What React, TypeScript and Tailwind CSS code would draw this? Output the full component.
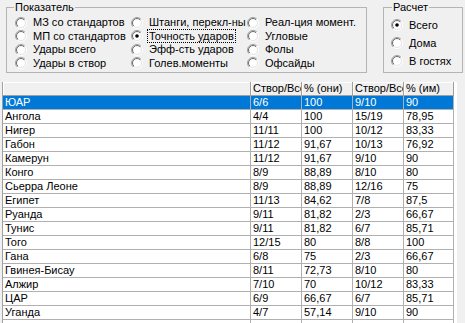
import React from 'react';

type Row = [string, string, string, string, string];

const rows: Row[] = [
  ['ЮАР', '6/6', '100', '9/10', '90'],
  ['Ангола', '4/4', '100', '15/19', '78,95'],
  ['Нигер', '11/11', '100', '10/12', '83,33'],
  ['Габон', '11/12', '91,67', '10/13', '76,92'],
  ['Камерун', '11/12', '91,67', '9/10', '90'],
  ['Конго', '8/9', '88,89', '8/10', '80'],
  ['Сьерра Леоне', '8/9', '88,89', '12/16', '75'],
  ['Египет', '11/13', '84,62', '7/8', '87,5'],
  ['Руанда', '9/11', '81,82', '2/3', '66,67'],
  ['Тунис', '9/11', '81,82', '6/7', '85,71'],
  ['Того', '12/15', '80', '8/8', '100'],
  ['Гана', '6/8', '75', '2/3', '66,67'],
  ['Гвинея-Бисау', '8/11', '72,73', '8/10', '80'],
  ['Алжир', '7/10', '70', '10/12', '83,33'],
  ['ЦАР', '6/9', '66,67', '6/7', '85,71'],
  ['Уганда', '4/7', '57,14', '9/10', '90'],
  ['', '', '', '', ''],
];

const headers = ['', 'Створ/Всего', '% (они)', 'Створ/Всего', '% (им)'];

const indicators = [
  'МЗ со стандартов',
  'Штанги, перекл-ны',
  'Реал-ция момент.',
  'МП со стандартов',
  'Точность ударов',
  'Угловые',
  'Удары всего',
  'Эфф-сть ударов',
  'Фолы',
  'Удары в створ',
  'Голев.моменты',
  'Офсайды',
];

const RadioDot: React.FC<{ checked?: boolean }> = ({ checked }) => (
  <svg width="12" height="12" viewBox="0 0 12 12" className="shrink-0">
    <defs>
      <linearGradient id="rOuter" x1="0" y1="0" x2="1" y2="1">
        <stop offset="50%" stopColor="#a0a0a0" />
        <stop offset="50%" stopColor="#ffffff" />
      </linearGradient>
      <linearGradient id="rInner" x1="0" y1="0" x2="1" y2="1">
        <stop offset="50%" stopColor="#696969" />
        <stop offset="50%" stopColor="#e3e3e3" />
      </linearGradient>
    </defs>
    <circle cx="6" cy="6" r="5.5" fill="none" stroke="url(#rOuter)" strokeWidth="1" />
    <circle cx="6" cy="6" r="4.5" fill="#ffffff" stroke="url(#rInner)" strokeWidth="1" />
    {checked && <circle cx="6" cy="6" r="1.8" fill="#000000" />}
  </svg>
);

const Radio: React.FC<{ label: string; checked?: boolean; focused?: boolean }> = ({ label, checked, focused }) => (
  <div className="flex items-center whitespace-nowrap">
    <RadioDot checked={checked} />
    <span
      className={
        focused
          ? 'ml-[5px] px-px leading-[12px] outline-1 outline-dotted outline-black'
          : 'ml-[6px] leading-[13px]'
      }
    >
      {label}
    </span>
  </div>
);

export default function App() {
  return (
    <div
      className="w-[465px] h-[323px] overflow-hidden bg-[#f0f0f0] text-[11px] text-black"
      style={{ fontFamily: '"Liberation Sans", Arial, sans-serif' }}
    >
      <div className="flex pt-px">
        <fieldset className="ml-[6px] w-[361px] h-[72px] border border-[#b4b4b4]">
          <legend className="ml-[7px] px-px leading-[13px]">Показатель</legend>
          <div className="grid grid-cols-[116px_116px_116px] grid-rows-[13px_14px_13px_14px] pl-[8px] pt-[2px]">
            {indicators.map((label) => (
              <Radio
                key={label}
                label={label}
                checked={label === 'Точность ударов'}
                focused={label === 'Точность ударов'}
              />
            ))}
          </div>
        </fieldset>

        <fieldset className="ml-[16px] w-[80px] h-[72px] border border-[#b4b4b4]">
          <legend className="ml-[8px] px-px leading-[13px]">Расчет</legend>
          <div className="grid grid-rows-[18px_18px_18px] pl-[7px] pt-[2px]">
            <Radio label="Всего" checked />
            <Radio label="Дома" />
            <Radio label="В гостях" />
          </div>
        </fieldset>
      </div>

      <div className="mt-[9px] ml-[2px] w-[455px] bg-white">
        <div className="grid w-fit grid-cols-[248px_51px_51px_51px_50px] border-l border-[#a0a0a0]">
          {headers.map((h, i) => (
            <div
              key={'h' + i}
              className="h-[14px] overflow-hidden whitespace-nowrap border-r border-b border-[#a0a0a0] bg-[#f0f0f0] pl-[2px] leading-[13px] shadow-[inset_1px_1px_0_#ffffff]"
            >
              {h}
            </div>
          ))}
          {rows.map((row, r) =>
            row.map((cell, c) => (
              <div
                key={r + '-' + c}
                className={
                  r === 0
                    ? 'h-[14px] overflow-hidden whitespace-nowrap border-r border-b border-[#b0b0b0] bg-[#0078d7] pl-[2px] leading-[13px] text-white'
                    : 'h-[14px] overflow-hidden whitespace-nowrap border-r border-b border-[#b0b0b0] pl-[2px] leading-[13px]'
                }
              >
                {cell}
              </div>
            ))
          )}
        </div>
      </div>
    </div>
  );
}
